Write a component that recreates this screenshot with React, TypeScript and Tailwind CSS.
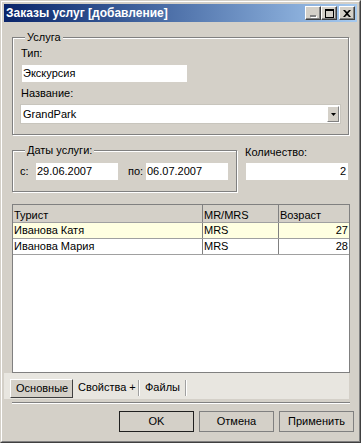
import type { ReactNode } from "react"

const GroupBox = ({ title, className, children }: { title: string; className: string; children: ReactNode }) => (
  <div className={`relative border border-[#808080] shadow-[1px_1px_0_#fff,inset_1px_1px_0_#fff] ${className}`}>
    <span className="absolute -top-[7px] left-[12px] bg-[#d4d0c8] px-[2px] leading-[13px]">{title}</span>
    {children}
  </div>
)

const TitleButton = ({ children }: { children: ReactNode }) => (
  <div className="flex h-[14px] w-[16px] items-center justify-center border border-t-white border-l-white border-r-[#404040] border-b-[#404040] bg-[#d4d0c8] shadow-[inset_-1px_-1px_0_#808080]">
    {children}
  </div>
)

const Button = ({ label, def }: { label: string; def?: boolean }) => (
  <button
    className={`h-[21px] w-[75px] border bg-[#d4d0c8] leading-[19px] ${
      def ? "border-[#202020] shadow-[inset_1px_1px_0_#d4d0c8]" : "border-[#808080]"
    }`}>
    {label}
  </button>
)

const rows = [
  { name: "Иванова Катя", title: "MRS", age: 27, active: true },
  { name: "Иванова Мария", title: "MRS", age: 28, active: false },
]

export default function App() {
  return (
    <div className="h-[443px] w-[361px] border border-t-[#d4d0c8] border-l-[#d4d0c8] border-r-[#404040] border-b-[#404040] bg-[#d4d0c8] font-['Liberation_Sans',Arial,sans-serif] text-[11px] leading-[13px] text-black">
      <div className="flex h-full flex-col border border-t-white border-l-white border-r-[#808080] border-b-[#808080] p-[2px]">

        {/* title bar */}
        <div className="flex h-[18px] shrink-0 items-center justify-between bg-linear-to-r from-[#0a246a] to-[#a6caf0] pl-[2px] pr-[2px]">
          <span className="text-[12px] font-bold leading-[18px] text-white">Заказы услуг [добавление]</span>
          <div className="flex items-center">
            <TitleButton>
              <div className="mt-[6px] h-[2px] w-[6px] bg-[#808080] shadow-[1px_1px_0_#fff]" />
            </TitleButton>
            <TitleButton>
              <div className="h-[9px] w-[9px] border border-t-2 border-black" />
            </TitleButton>
            <div className="ml-[2px]">
              <TitleButton>
                <svg width="8" height="7" viewBox="0 0 8 7">
                  <path d="M0 0h2l2 2 2-2h2L5 3.5 8 7H6L4 5 2 7H0l3-3.5z" fill="#000" />
                </svg>
              </TitleButton>
            </div>
          </div>
        </div>

        {/* Услуга */}
        <GroupBox title="Услуга" className="mx-[8px] mt-[15px] w-[337px] pb-[10px] pl-[7px] pt-[9px]">
          <div className="ml-[1px]">Тип:</div>
          <div className="ml-[2px] mt-[5px] h-[17px] w-[165px] bg-white pl-[1px] leading-[17px]">Экскурсия</div>
          <div className="ml-[1px] mt-[5px]">Название:</div>
          <div className="mt-[4px] flex h-[20px] w-[321px] items-center border border-[#c8c5bd] bg-white p-[1px]">
            <span className="flex-1 pl-[1px]">GrandPark</span>
            <div className="flex h-[16px] w-[12px] items-center justify-center border border-t-white border-l-white border-r-[#808080] border-b-[#808080] bg-[#d4d0c8]">
              <svg width="5" height="3" viewBox="0 0 5 3">
                <path d="M0 0h5L2.5 3z" fill="#000" />
              </svg>
            </div>
          </div>
        </GroupBox>

        {/* Даты / Количество */}
        <div className="flex">
          <GroupBox title="Даты услуги:" className="ml-[8px] mt-[15px] flex w-[225px] items-center pb-[11px] pl-[7px] pt-[12px]">
            <span className="w-[16px]">с:</span>
            <div className="h-[17px] w-[82px] bg-white pl-[1px] leading-[17px]">29.06.2007</div>
            <span className="ml-[10px] w-[18px]">по:</span>
            <div className="h-[17px] w-[82px] bg-white pl-[1px] leading-[17px]">06.07.2007</div>
          </GroupBox>
          <div className="ml-[8px] mt-[11px] flex flex-col">
            <span>Количество:</span>
            <div className="ml-[1px] mt-[4px] h-[17px] w-[102px] bg-white pr-[2px] text-right leading-[17px]">2</div>
          </div>
        </div>

        {/* Туристы */}
        <div className="mx-[8px] mt-[12px] h-[169px] w-[338px] border border-[#808080] bg-white">
          <div className="grid h-[18px] grid-cols-[190px_76px_1fr] border-b border-[#a0a0a0] bg-[#d4d0c8]">
            <div className="border-r border-[#808080] pl-[1px] pt-[4px]">Турист</div>
            <div className="border-r border-[#808080] pl-[1px] pt-[4px]">MR/MRS</div>
            <div className="pl-[1px] pt-[4px]">Возраст</div>
          </div>
          {rows.map(r => (
            <div key={r.name} className={`grid h-[16px] grid-cols-[190px_76px_1fr] border-b border-[#a0a0a0] ${r.active ? "bg-[#ffffe1]" : "bg-white"}`}>
              <div className="border-r border-[#808080] pl-[1px] pt-[1px]">{r.name}</div>
              <div className="border-r border-[#808080] pl-[1px] pt-[1px]">{r.title}</div>
              <div className="pr-[1px] pt-[1px] text-right">{r.age}</div>
            </div>
          ))}
        </div>

        {/* вкладки */}
        <div className="flex h-[26px] w-[345px] items-start bg-[#e8e6e0] pl-[6px] pt-[6px]">
          <div className="h-[19px] w-[63px] border border-t-white border-l-white border-r-[#404040] border-b-[#404040] bg-[#d4d0c8] pl-[5px] leading-[17px]">Основные</div>
          <div className="flex h-[17px] items-center">
            <span className="w-[65px] pl-[5px]">Свойства +</span>
            <div className="h-[16px] w-[2px] border-l border-[#a0a0a0] bg-white" />
            <span className="w-[45px] pl-[5px]">Файлы</span>
            <div className="h-[16px] w-[2px] border-l border-[#a0a0a0] bg-white" />
          </div>
        </div>

        <div className="mx-[8px] mt-[3px] h-[2px] w-[338px] border-t border-b border-t-[#808080] border-b-white" />

        <div className="mt-[7px] flex justify-end gap-[5px] pr-[3px]">
          <Button label="OK" def />
          <Button label="Отмена" />
          <Button label="Применить" />
        </div>
      </div>
    </div>
  )
}
